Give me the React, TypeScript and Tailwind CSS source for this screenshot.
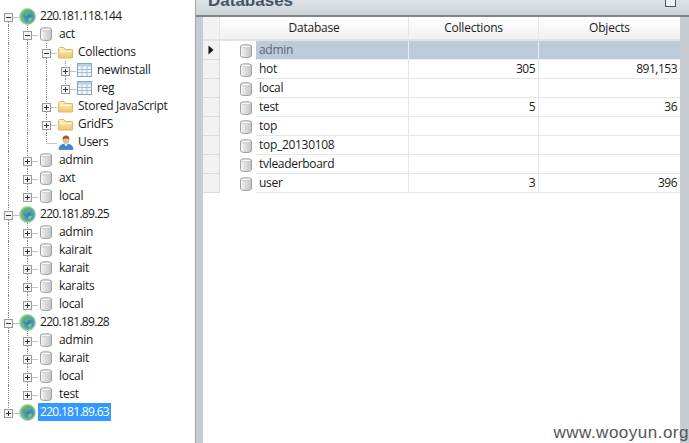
import React from 'react';

type IconName = 'server' | 'db' | 'folder' | 'table' | 'user';
type Expander = 'plus' | 'minus' | 'none';

type TreeRow = {
  label: string;
  icon: IconName;
  expander: Expander;
  // one flag per ancestor level: does the dotted line keep going down
  guides: boolean[];
  last?: boolean;
  selected?: boolean;
};

const treeRows: TreeRow[] = [
  { label: '220.181.118.144', icon: 'server', expander: 'minus', guides: [] },
  { label: 'act', icon: 'db', expander: 'minus', guides: [true] },
  { label: 'Collections', icon: 'folder', expander: 'minus', guides: [true, true] },
  { label: 'newinstall', icon: 'table', expander: 'plus', guides: [true, true, true] },
  { label: 'reg', icon: 'table', expander: 'plus', guides: [true, true, true], last: true },
  { label: 'Stored JavaScript', icon: 'folder', expander: 'plus', guides: [true, true] },
  { label: 'GridFS', icon: 'folder', expander: 'plus', guides: [true, true] },
  { label: 'Users', icon: 'user', expander: 'none', guides: [true, true], last: true },
  { label: 'admin', icon: 'db', expander: 'plus', guides: [true] },
  { label: 'axt', icon: 'db', expander: 'plus', guides: [true] },
  { label: 'local', icon: 'db', expander: 'plus', guides: [true], last: true },
  { label: '220.181.89.25', icon: 'server', expander: 'minus', guides: [] },
  { label: 'admin', icon: 'db', expander: 'plus', guides: [true] },
  { label: 'kairait', icon: 'db', expander: 'plus', guides: [true] },
  { label: 'karait', icon: 'db', expander: 'plus', guides: [true] },
  { label: 'karaits', icon: 'db', expander: 'plus', guides: [true] },
  { label: 'local', icon: 'db', expander: 'plus', guides: [true], last: true },
  { label: '220.181.89.28', icon: 'server', expander: 'minus', guides: [] },
  { label: 'admin', icon: 'db', expander: 'plus', guides: [true] },
  { label: 'karait', icon: 'db', expander: 'plus', guides: [true] },
  { label: 'local', icon: 'db', expander: 'plus', guides: [true] },
  { label: 'test', icon: 'db', expander: 'plus', guides: [true], last: true },
  { label: '220.181.89.63', icon: 'server', expander: 'plus', guides: [], last: true, selected: true },
];

const dbRows = [
  { name: 'admin', collections: '', objects: '' },
  { name: 'hot', collections: '305', objects: '891,153' },
  { name: 'local', collections: '', objects: '' },
  { name: 'test', collections: '5', objects: '36' },
  { name: 'top', collections: '', objects: '' },
  { name: 'top_20130108', collections: '', objects: '' },
  { name: 'tvleaderboard', collections: '', objects: '' },
  { name: 'user', collections: '3', objects: '396' },
];

function DbIcon() {
  return (
    <svg width="14" height="16" viewBox="0 0 14 16" className="shrink-0">
      <defs>
        <linearGradient id="dbBody" x1="0" x2="1" y1="0" y2="0">
          <stop offset="0" stopColor="#f8f8f8" />
          <stop offset="0.45" stopColor="#dcdcdc" />
          <stop offset="1" stopColor="#c4c4c4" />
        </linearGradient>
      </defs>
      <path
        d="M1.500 3.200C1.500 1.300 12.500 1.300 12.500 3.200V12.800C12.500 15.100 1.500 15.100 1.500 12.800Z"
        fill="url(#dbBody)"
        stroke="#a0a0a0"
      />
      <ellipse cx="7" cy="3.500" rx="4.600" ry="1.300" fill="#fafafa" stroke="#b4b4b4" strokeWidth="0.6" />
    </svg>
  );
}

function GlobeIcon() {
  return (
    <svg width="17" height="17" viewBox="0 0 17 17" className="-ml-px shrink-0">
      <defs>
        <radialGradient id="globeSea" cx="0.55" cy="0.5" r="0.55">
          <stop offset="0" stopColor="#2f7fc0" />
          <stop offset="0.55" stopColor="#4b97b4" />
          <stop offset="0.85" stopColor="#7fc58a" />
          <stop offset="1" stopColor="#b5dfa6" />
        </radialGradient>
      </defs>
      <circle cx="8.500" cy="8.500" r="8" fill="url(#globeSea)" stroke="#a3cf9b" strokeWidth="0.8" />
      <path d="M6 3.500c2-1.500 5-1 6.500 0.500l-1 2.500-2.500-0.500-1 2.500-2-1-1-2z" fill="#5eb26a" opacity="0.9" />
      <path d="M9.500 10.500l2.500-1 1 1-2 3-2-1z" fill="#8fcf8c" opacity="0.85" />
      <path d="M3 8.500l2 1 1 3-2-1z" fill="#74bd7e" opacity="0.8" />
    </svg>
  );
}

function FolderIcon() {
  return (
    <svg width="15" height="13" viewBox="0 0 15 13" className="shrink-0">
      <defs>
        <linearGradient id="folderFill" x1="0" x2="0" y1="0" y2="1">
          <stop offset="0" stopColor="#fdf0c0" />
          <stop offset="1" stopColor="#eec76a" />
        </linearGradient>
      </defs>
      <path d="M0.500 2.500V12H14.500V3.500H7L6 1.500H1.500Z" fill="url(#folderFill)" stroke="#dcb867" />
      <path d="M2 5.500H13" stroke="#fff8dc" />
    </svg>
  );
}

function TableIcon() {
  return (
    <svg width="15" height="14" viewBox="0 0 15 14" className="shrink-0">
      <rect x="0.500" y="0.500" width="14" height="13" fill="#f2f7fb" stroke="#86a6c2" />
      <rect x="1" y="1" width="13" height="2.500" fill="#b7d0e4" />
      <path d="M5 3.500V13M10 3.500V13M1 6.500H14M1 9.500H14" stroke="#a3bdd3" />
    </svg>
  );
}

function UserIcon() {
  return (
    <svg width="16" height="15" viewBox="0 0 16 15" className="shrink-0">
      <path d="M1 14.500C1 10.500 4 9 8 9s7 1.500 7 5.500Z" fill="#3d86d6" stroke="#2f6cb0" strokeWidth="0.6" />
      <path d="M6 9l2 2.500L10 9Z" fill="#e8eef5" />
      <circle cx="8" cy="5" r="3.300" fill="#eab98c" />
      <path d="M4.600 5C4.300 1.500 6.500 0.500 8 0.500s3.700 1 3.400 4.500C10.500 3 6 3 4.600 5Z" fill="#9a5a2c" />
    </svg>
  );
}

function NodeIcon({ name }: { name: IconName }) {
  if (name === 'server') return <GlobeIcon />;
  if (name === 'db') return <DbIcon />;
  if (name === 'folder') return <FolderIcon />;
  if (name === 'table') return <TableIcon />;
  return <UserIcon />;
}

// the dotted elbow + the small +/- box, drawn per row
function Connector({ expander, last, root, first }: { expander: Expander; last?: boolean; root: boolean; first: boolean }) {
  return (
    <svg width="19" height="18" viewBox="0 0 19 18" className="shrink-0">
      <g stroke="#8a8a8a" strokeDasharray="1 1" fill="none">
        {!(root && first) && <path d="M8.500 0V9" />}
        {!last && <path d="M8.500 9V18" />}
        <path d="M8.500 10.500H19" />
      </g>
      {expander !== 'none' && (
        <g>
          <rect x="4.500" y="6.500" width="8" height="8" fill="#f5f5f5" stroke="#9a9a9a" />
          <path d="M6 10.500H11" stroke="#333" />
          {expander === 'plus' && <path d="M8.500 8V13" stroke="#333" />}
        </g>
      )}
    </svg>
  );
}

function Tree() {
  return (
    <div className="flex w-[196px] shrink-0 flex-col border-r border-[#a0a4a8] bg-white pt-[7px]">
      {treeRows.map((row, index) => {
        const isServer = row.icon === 'server';
        return (
          <div key={index} className="flex h-[18px] shrink-0 items-center">
            {row.guides.map((on, level) => (
              <div key={level} className="h-full w-[19px] shrink-0 pl-[8px]">
                {on && <div className="h-full w-px border-l border-dotted border-[#8a8a8a]" />}
              </div>
            ))}
            <Connector expander={row.expander} last={row.last} root={row.guides.length === 0} first={index === 0} />
            <div className="flex w-[19px] shrink-0 pl-[1px]">
              <NodeIcon name={row.icon} />
            </div>
            <span
              className={`flex h-[18px] items-center whitespace-nowrap px-[2px] ${
                isServer ? 'tracking-[-0.7px]' : 'tracking-[-0.3px]'
              } ${row.selected ? 'bg-[#3399ff] text-white' : 'text-[#1a1a1a]'}`}
            >
              {row.label}
            </span>
          </div>
        );
      })}
    </div>
  );
}

function DatabasesGrid() {
  return (
    <div className="flex min-h-0 flex-1 flex-col bg-white">
      <div className="flex h-[24px] shrink-0 border-b-2 border-[#dfe3e6] bg-gradient-to-b from-white to-[#f0f0f0] tracking-[-0.2px] text-[#1a1a1a]">
        <div className="w-[17px] shrink-0 border-r border-[#e4e4e4] bg-[#f2f2f2]" />
        <div className="flex w-[189px] shrink-0 items-center justify-center border-r border-[#e4e4e4]">Database</div>
        <div className="flex w-[130px] shrink-0 items-center justify-center border-r border-[#e4e4e4]">Collections</div>
        <div className="flex flex-1 items-center justify-center">Objects</div>
      </div>
      {dbRows.map((row, index) => {
        const active = index === 0;
        return (
          <div key={row.name} className="flex h-[19px] shrink-0 text-[#1a1a1a]">
            <div className="flex w-[17px] shrink-0 items-center justify-center border-r border-b border-[#dcdcdc] bg-[#f2f2f2]">
              {active && (
                <svg width="6" height="10" viewBox="0 0 6 10">
                  <path d="M0.500 0.500L5.500 5L0.500 9.500Z" fill="#111" />
                </svg>
              )}
            </div>
            <div className="flex w-[36px] shrink-0 items-center justify-end pr-[3px]">
              <DbIcon />
            </div>
            <div
              className={`flex w-[153px] shrink-0 items-center border-r border-b pl-[3px] tracking-[-0.3px] ${
                active ? 'border-[#e8edf1] bg-[#bccbd9] text-[#5a6672]' : 'border-[#e6e6e6]'
              }`}
            >
              {row.name}
            </div>
            <div
              className={`flex w-[130px] shrink-0 items-center justify-end border-r border-b pr-[3px] tracking-[-0.5px] ${
                active ? 'border-[#e8edf1] bg-[#bccbd9]' : 'border-[#e6e6e6]'
              }`}
            >
              {row.collections}
            </div>
            <div
              className={`flex flex-1 items-center justify-end border-b pr-[3px] tracking-[-0.5px] ${
                active ? 'border-[#e8edf1] bg-[#bccbd9]' : 'border-[#e6e6e6]'
              }`}
            >
              {row.objects}
            </div>
          </div>
        );
      })}
    </div>
  );
}

export default function App() {
  return (
    <div className="relative flex h-[443px] w-[689px] overflow-hidden bg-white font-['Open_Sans','Noto_Sans',sans-serif] text-[12px]">
      <Tree />
      <div className="flex min-w-0 flex-1 flex-col">
        <div className="flex h-[17px] shrink-0 justify-between overflow-hidden border-b-2 border-[#7f868c] bg-gradient-to-b from-[#dde3e8] to-[#ccd3d9] pl-[12px] pr-[13px]">
          <span className="-mt-[9px] font-['Liberation_Sans',sans-serif] text-[17px] font-bold leading-[20px] text-[#465563]">Databases</span>
          <div className="-mt-[4px] h-[11px] w-[11px] border border-[#555] bg-[#eef1f3]" />
        </div>
        <div className="flex min-h-0 flex-1 flex-col bg-[#c6ccd2] pl-[7px] pr-[9px]">
          <DatabasesGrid />
        </div>
      </div>
      <div className="absolute bottom-[1px] right-0 whitespace-nowrap font-['Liberation_Sans',sans-serif] text-[17px] leading-[18px] tracking-[0.5px] text-[#555]">
        www.wooyun.org
      </div>
    </div>
  );
}
